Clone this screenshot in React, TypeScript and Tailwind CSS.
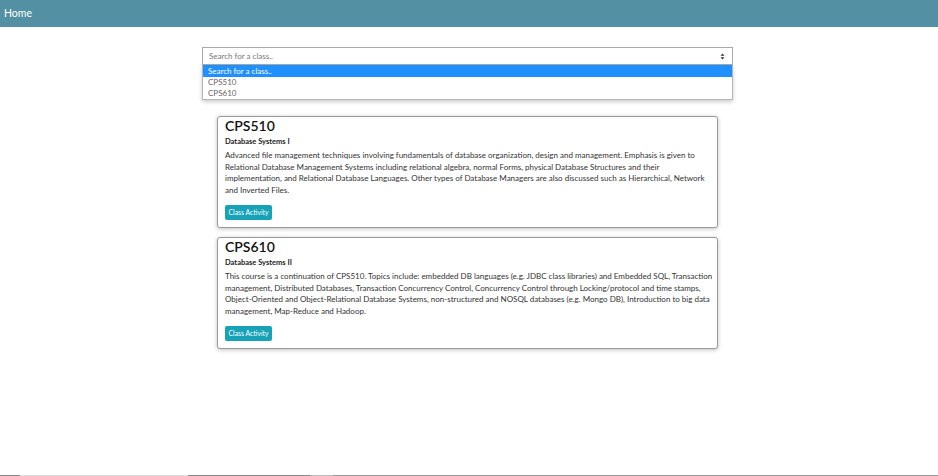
import * as React from "react";

const classes = [
  {
    code: "CPS510",
    name: "Database Systems I",
    desc: "Advanced file management techniques involving fundamentals of database organization, design and management. Emphasis is given to Relational Database Management Systems including relational algebra, normal Forms, physical Database Structures and their implementation, and Relational Database Languages. Other types of Database Managers are also discussed such as Hierarchical, Network and Inverted Files.",
  },
  {
    code: "CPS610",
    name: "Database Systems II",
    desc: "This course is a continuation of CPS510. Topics include: embedded DB languages (e.g. JDBC class libraries) and Embedded SQL, Transaction management, Distributed Databases, Transaction Concurrency Control, Concurrency Control through Locking/protocol and time stamps, Object-Oriented and Object-Relational Database Systems, non-structured and NOSQL databases (e.g. Mongo DB), Introduction to big data management, Map-Reduce and Hadoop.",
  },
];

function ClassCard({ code, name, desc }: { code: string; name: string; desc: string }) {
  return (
    <div className="w-[501px] mx-auto rounded-[3px] border border-[#9a9a9a] bg-white pl-[7px] pr-[4px] pb-[6px] shadow-[0_1px_4px_rgba(0,0,0,0.25)]">
      <h2 className="text-[14px] leading-[17px] font-semibold text-[#111]">{code}</h2>
      <p className="mt-[2px] text-[7.5px] leading-[12px] font-bold text-[#222]">{name}</p>
      <p className="mt-[2px] text-[8px] leading-[11.7px] text-[#333]">{desc}</p>
      <button className="mt-[7px] h-[15px] w-[47px] rounded-[2px] bg-[#17a2b8] text-[6.8px] leading-[15px] text-white">
        Class Activity
      </button>
    </div>
  );
}

export default function App() {
  return (
    <div className="relative h-[476px] w-[938px] overflow-hidden bg-white font-['Lato','Open_Sans',sans-serif]">
      <header className="flex h-[27px] items-center bg-[#5390a3] px-[4px]">
        <span className="text-[10.5px] text-white">Home</span>
      </header>

      <div className="w-[935px]">
        <div className="relative mx-auto mt-[20px] w-[531px]">
          <div className="flex h-[18px] items-center justify-between border border-[#a9a9a9] bg-white pl-[6px] pr-[7px]">
            <span className="text-[8px] text-[#777]">Search for a class..</span>
            <svg width="5" height="7" viewBox="0 0 5 7" className="text-[#333]">
              <path d="M2.5 0.5 L4.5 2.7 H0.5 Z M2.5 6.5 L4.5 4.3 H0.5 Z" fill="currentColor" />
            </svg>
          </div>
          <ul className="absolute left-0 right-0 top-[18px] z-10 border border-t-0 border-[#b5b5b5] bg-white shadow-[0_2px_4px_rgba(0,0,0,0.2)]">
            <li className="h-[12px] bg-[#1e90ff] pl-[5px] text-[8px] leading-[12px] text-white">Search for a class..</li>
            <li className="h-[11px] pl-[5px] text-[8px] leading-[11px] text-[#666]">CPS510</li>
            <li className="h-[11px] pl-[5px] text-[8px] leading-[11px] text-[#666]">CPS610</li>
          </ul>
        </div>

        <div className="mt-[51px] flex flex-col gap-[9px]">
          {classes.map((c) => (
            <ClassCard key={c.code} {...c} />
          ))}
        </div>
      </div>

      <div className="absolute bottom-0 left-0 right-0 flex h-[1px]">
        <div className="w-[20px] bg-[#888]" />
        <div className="w-[168px] bg-[#ddd]" />
        <div className="w-[122px] bg-[#888]" />
        <div className="w-[23px] bg-[#bbb]" />
        <div className="flex-1 bg-[#999]" />
      </div>
    </div>
  );
}
